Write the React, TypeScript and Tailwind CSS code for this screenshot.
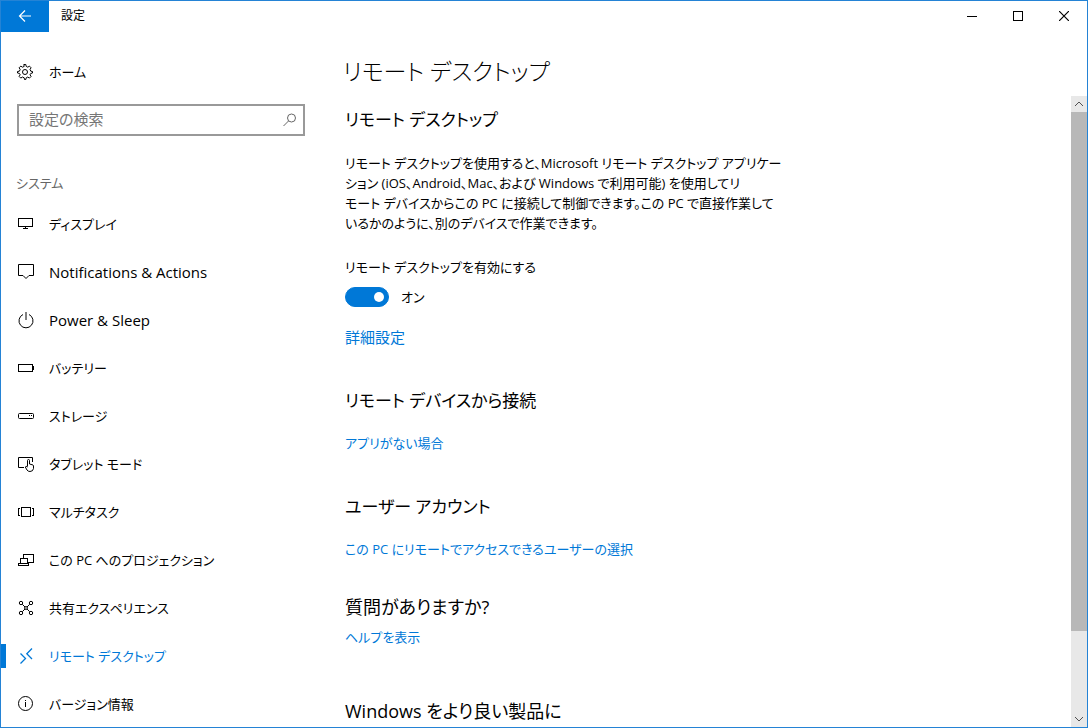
import type { ReactNode } from "react";

type NavItem = { label: string; icon: ReactNode; latin?: boolean; active?: boolean };

const navItems: NavItem[] = [
  {
    label: "ディスプレイ",
    icon: (
      <g shapeRendering="crispEdges">
        <rect x="2.5" y="4.5" width="14" height="8" />
        <path d="M9.5 13V14.5M7 14.5H12" />
      </g>
    ),
  },
  {
    label: "Notifications & Actions",
    latin: true,
    icon: <path d="M2.5 2.5H17.5V13.5H13L10 16.5L7 13.5H2.5Z" />,
  },
  {
    label: "Power & Sleep",
    latin: true,
    icon: <path d="M7 4.5A7 7 0 1 0 13 4.5M10 2V10" />,
  },
  {
    label: "バッテリー",
    icon: (
      <g shapeRendering="crispEdges">
        <rect x="2.5" y="6.5" width="14" height="7" />
        <path d="M17.5 8V12" />
      </g>
    ),
  },
  {
    label: "ストレージ",
    icon: (
      <>
        <rect x="2.5" y="7.5" width="15" height="5" rx="1" />
        <path d="M13 9.5H14M15 9.5H16" />
      </>
    ),
  },
  {
    label: "タブレット モード",
    icon: (
      <>
        <path d="M8 13.5H2.5V3.5H16.5V8" />
        <path d="M11.5 12.5V6.5Q11.5 5.5 12.5 5.5T13.5 6.5V10L17 11Q17.5 11.3 17.5 12V14.5Q17 17.5 14 17.5Q12 17.5 11 16L9.3 13Q9.8 11.5 11.5 13" />
      </>
    ),
  },
  {
    label: "マルチタスク",
    icon: (
      <g shapeRendering="crispEdges">
        <rect x="5.5" y="5.5" width="9" height="9" />
        <path d="M4 6.5H2.5V13.5H4M16 6.5H17.5V13.5H16" />
      </g>
    ),
  },
  {
    label: "この PC へのプロジェクション",
    icon: (
      <g shapeRendering="crispEdges">
        <path d="M7.5 8V4.5H17.5V12.5H12" />
        <path d="M4.5 13V8.5H11.5V13" />
        <path d="M2.5 13.5H12.5V15.5H2.5Z" />
      </g>
    ),
  },
  {
    label: "共有エクスペリエンス",
    icon: (
      <>
        <circle cx="5" cy="5" r="1.7" />
        <circle cx="15" cy="5" r="1.7" />
        <circle cx="5" cy="15" r="1.7" />
        <circle cx="15" cy="15" r="1.7" />
        <circle cx="10" cy="10" r="1.4" />
        <path d="M6.3 6.3L9 9M13.7 6.3L11 9M6.3 13.7L9 11M13.7 13.7L11 11" />
      </>
    ),
  },
  {
    label: "リモート デスクトップ",
    active: true,
    icon: <path strokeWidth="1.3" d="M4.5 7.5L9.5 12.5L4.5 17.5M16 2.5L10.8 7.7L16 13" />,
  },
  {
    label: "バージョン情報",
    icon: (
      <>
        <circle cx="9.5" cy="9.5" r="7" />
        <path d="M9.5 8V13M9.5 6V7" />
      </>
    ),
  },
];

function Icon({ children }: { children: ReactNode }) {
  return (
    <svg viewBox="0 0 20 20" className="size-5 shrink-0" fill="none" stroke="currentColor">
      {children}
    </svg>
  );
}

function TitleBar() {
  return (
    <header className="flex h-[31px] shrink-0 items-stretch">
      <button aria-label="戻る" className="flex w-12 items-center justify-center bg-[#0078d7] pb-px text-white">
        <svg viewBox="0 0 14 14" className="size-3.5" fill="none" stroke="currentColor" strokeWidth="1.2">
          <path d="M13 7H1.5M7 1.5L1.5 7L7 12.5" />
        </svg>
      </button>
      <span className="flex flex-1 items-center pb-0.5 pl-3 text-xs">設定</span>
      <button aria-label="最小化" className="flex w-[46px] items-center justify-center pb-px">
        <svg viewBox="0 0 10 10" className="size-2.5" stroke="currentColor">
          <path d="M0 5.5H10" />
        </svg>
      </button>
      <button aria-label="最大化" className="flex w-[46px] items-center justify-center pb-px">
        <svg viewBox="0 0 10 10" className="size-2.5" fill="none" stroke="currentColor">
          <rect x="0.5" y="0.5" width="9" height="9" />
        </svg>
      </button>
      <button aria-label="閉じる" className="flex w-[46px] items-center justify-center pb-px">
        <svg viewBox="0 0 10 10" className="size-2.5" stroke="currentColor" strokeWidth="1.2">
          <path d="M0 0L10 10M10 0L0 10" />
        </svg>
      </button>
    </header>
  );
}

function NavLink({ item }: { item: NavItem }) {
  return (
    <a
      href="#"
      aria-current={item.active ? "page" : undefined}
      className={
        item.active
          ? "relative flex h-12 items-center gap-[13px] pl-[15px] text-[#0078d7]"
          : "relative flex h-12 items-center gap-[13px] pl-[15px]"
      }
    >
      {item.active && <span className="absolute top-3 left-0 h-6 w-[5px] bg-[#0078d7]" />}
      <Icon>{item.icon}</Icon>
      <span className={item.latin ? "text-[15px]" : "text-[13px]"}>{item.label}</span>
    </a>
  );
}

function Sidebar() {
  return (
    <aside className="w-[328px] shrink-0 pt-4">
      <a href="#home" className="flex h-12 items-center gap-[13px] pl-[15px]">
        <Icon>
          <circle cx="9" cy="10" r="2.5" />
          <path d="M7.8 2.5L8.2 4.4L6.4 5.2L4.8 4.1L3.1 5.8L4.2 7.4L3.4 9.2L1.5 9.5V11L3.4 11.4L4.2 12.8L3.1 14.4L4.8 16.1L6.4 15L8.2 15.8L8.5 17.5H9.8L10.2 15.8L11.8 15L13.4 16.1L15.1 14.4L14 12.8L14.8 11.4L16.5 11V9.5L14.8 9.2L14 7.4L15.1 5.8L13.4 4.1L11.8 5.2L10.2 4.4L9.8 2.5Z" />
        </Icon>
        ホーム
      </a>

      <div className="mt-2 mr-6 ml-4 flex h-8 items-center border-2 border-[#999999] pr-1.5 pl-2.5 text-[#666666]">
        <input
          type="search"
          aria-label="設定の検索"
          placeholder="設定の検索"
          className="min-w-0 flex-1 bg-transparent pb-0.5 text-[15px] outline-none placeholder:text-[#767676]"
        />
        <svg viewBox="0 0 14 14" className="size-3.5" fill="none" stroke="currentColor">
          <circle cx="8.5" cy="5" r="4" />
          <path d="M5.5 8L0.5 13" />
        </svg>
      </div>

      <h2 className="mt-8 flex h-8 items-center pb-0.5 pl-[15px] text-[#666666]">システム</h2>
      <nav>
        {navItems.map((item) => (
          <NavLink key={item.label} item={item} />
        ))}
      </nav>
    </aside>
  );
}

function ScrollBar() {
  return (
    <div className="flex w-4 shrink-0 flex-col bg-[#e8e8e8] text-[#505050]">
      <button aria-label="上へスクロール" className="flex h-4 items-center justify-center">
        <svg viewBox="0 0 8 8" className="size-2" fill="none" stroke="currentColor">
          <path d="M0 6L4 2L8 6" />
        </svg>
      </button>
      <div className="flex-1">
        <div className="h-13/15 bg-[#b8b8b8]" />
      </div>
      <button aria-label="下へスクロール" className="flex h-4 items-center justify-center">
        <svg viewBox="0 0 8 8" className="size-2" fill="none" stroke="currentColor">
          <path d="M0 2L4 6L8 2" />
        </svg>
      </button>
    </div>
  );
}

export default function App() {
  return (
    <div className="flex h-screen flex-col overflow-hidden border border-[#2483d5] bg-white font-['Open_Sans','Noto_Sans_CJK_JP',sans-serif] text-[13px] leading-5 whitespace-nowrap text-black [font-feature-settings:'palt']">
      <TitleBar />
      <div className="flex min-h-0 flex-1">
        <Sidebar />
        <div className="flex min-w-0 flex-1 flex-col">
          <h1 className="flex h-16 shrink-0 items-center pt-3.5 pl-3.5 text-[23px] font-light">
            リモート デスクトップ
          </h1>
          <div className="flex min-h-0 flex-1">
            <main className="min-w-0 flex-1 overflow-hidden pl-4">
              <h2 className="mt-2 text-[17px] leading-8">リモート デスクトップ</h2>
              <p className="mt-[17px]">
                リモート デスクトップを使用すると、Microsoft リモート デスクトップ アプリケー
                <br />
                ション (iOS、Android、Mac、および Windows で利用可能) を使用してリ
                <br />
                モート デバイスからこの PC に接続して制御できます。この PC で直接作業して
                <br />
                いるかのように、別のデバイスで作業できます。
              </p>
              <label htmlFor="remote" className="mt-6 block">
                リモート デスクトップを有効にする
              </label>
              <div className="mt-2.5 flex h-5 items-center gap-3">
                <input
                  id="remote"
                  type="checkbox"
                  role="switch"
                  defaultChecked
                  className="h-5 w-11 appearance-none rounded-full border border-[#0078d7] bg-white p-1 before:block before:size-2.5 before:rounded-full before:bg-black checked:bg-[#0078d7] checked:before:ml-auto checked:before:bg-white"
                />
                <span>オン</span>
              </div>
              <a href="#advanced" className="mt-5 block w-fit text-[15px] text-[#0078d7]">
                詳細設定
              </a>

              <h2 className="mt-[38px] text-[17px] leading-8">リモート デバイスから接続</h2>
              <a href="#apps" className="mt-4 block w-fit text-[#0078d7]">
                アプリがない場合
              </a>

              <h2 className="mt-[38px] text-[17px] leading-8">ユーザー アカウント</h2>
              <a href="#users" className="mt-4 block w-fit text-[#0078d7]">
                この PC にリモートでアクセスできるユーザーの選択
              </a>

              <h2 className="mt-8 text-lg leading-8">質問がありますか?</h2>
              <a href="#help" className="mt-1 block w-fit text-[#0078d7]">
                ヘルプを表示
              </a>

              <h2 className="mt-12 text-lg leading-8">Windows をより良い製品に</h2>
            </main>
            <ScrollBar />
          </div>
        </div>
      </div>
    </div>
  );
}
